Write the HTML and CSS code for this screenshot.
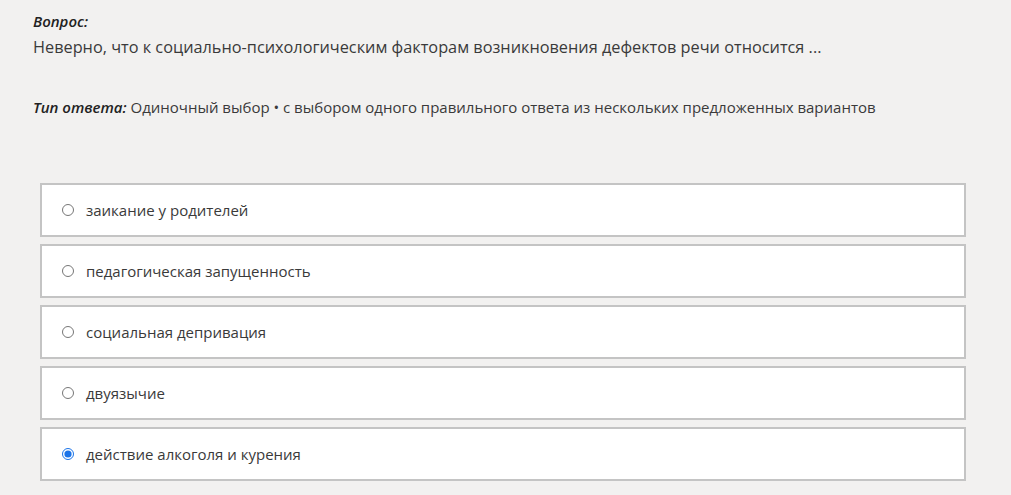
FILE: index.html
```html
<!DOCTYPE html>
<html lang="ru">
<head>
    <meta charset="UTF-8">
    <meta name="viewport" content="width=device-width, initial-scale=1.0">
    <title>Вопрос</title>
    <link rel="stylesheet" href="styles.css">
</head>
<body>
    <div class="page">
        <div class="question-block">
            <p class="label">Вопрос:</p>
            <p class="question">Неверно, что к социально-психологическим факторам возникновения дефектов речи относится ...</p>
        </div>

        <p class="answer-type"><span class="label">Тип ответа:</span> Одиночный выбор • с выбором одного правильного ответа из нескольких предложенных вариантов</p>

        <!-- Answer options -->
        <div class="options">
            <label class="option">
                <input type="radio" name="answer">
                <span>заикание у родителей</span>
            </label>
            <label class="option">
                <input type="radio" name="answer">
                <span>педагогическая запущенность</span>
            </label>
            <label class="option">
                <input type="radio" name="answer">
                <span>социальная депривация</span>
            </label>
            <label class="option">
                <input type="radio" name="answer">
                <span>двуязычие</span>
            </label>
            <label class="option">
                <input type="radio" name="answer" checked>
                <span>действие алкоголя и курения</span>
            </label>
        </div>
    </div>
</body>
</html>
```

FILE: styles.css
```css
body {
    background-color: #f2f1f0;
    color: #3a3a3a;
    font-family: 'Open Sans', 'Noto Sans', sans-serif;
    margin: 0;
}
.page {
    padding: 10px 45px 0 33px;
}
p {
    margin: 0;
}
.label {
    font-weight: 600;
    font-style: italic;
    color: #222222;
    font-size: 15px;
}
.question-block .label {
    line-height: 22px;
}
.question {
    font-size: 16.3px;
    line-height: 30px;
}
.answer-type {
    margin-top: 35px;
    font-size: 15px;
    line-height: 20px;
}
.options {
    margin-top: 66px;
    margin-left: 7px;
    display: flex;
    flex-direction: column;
    gap: 7px;
}
.option {
    display: flex;
    align-items: center;
    height: 50px;
    padding-left: 20px;
    background-color: #ffffff;
    border: 2px solid #c4c4c4;
    font-size: 15px;
    cursor: pointer;
}
.option input {
    width: 12px;
    height: 12px;
    margin: 0 12px 0 0;
    accent-color: #1a73e8;
}
```
